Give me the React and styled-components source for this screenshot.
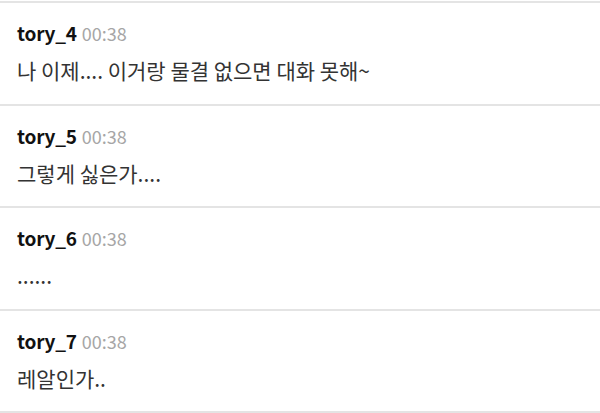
import React from "react";
import styled, { createGlobalStyle } from "styled-components";

const GlobalStyle = createGlobalStyle`
  html, body {
    margin: 0;
    padding: 0;
    background: #fff;
  }
  body {
    font-family: "Noto Sans CJK KR", "Noto Sans", sans-serif;
  }
`;

const messages = [
  { user: "tory_4", time: "00:38", text: "나 이제.... 이거랑 물결 없으면 대화 못해~" },
  { user: "tory_5", time: "00:38", text: "그렇게 싫은가...." },
  { user: "tory_6", time: "00:38", text: "......" },
  { user: "tory_7", time: "00:38", text: "레알인가.." },
];

export default function App() {
  return (
    <>
      <GlobalStyle />
      <List>
        {messages.map((m, i) => (
          <Item key={i}>
            <Header>
              <Name>{m.user}</Name>
              <Time>{m.time}</Time>
            </Header>
            <Text>{m.text}</Text>
          </Item>
        ))}
      </List>
    </>
  );
}

const List = styled.ul`
  list-style: none;
  margin: 1px 0 0;
  padding: 0;
  border-top: 2px solid #e4e4e4;
`;

const Item = styled.li`
  display: flex;
  flex-direction: column;
  gap: 9px;
  height: 102.5px;
  box-sizing: border-box;
  padding: 17px 17px 0;
  border-bottom: 2px solid #e4e4e4;
`;

const Header = styled.div`
  display: flex;
  align-items: baseline;
  gap: 5px;
  line-height: 26px;
`;

const Name = styled.span`
  font-size: 19px;
  font-weight: 700;
  color: #111;
  letter-spacing: -0.2px;
`;

const Time = styled.span`
  font-size: 18px;
  color: #a6a6a6;
`;

const Text = styled.p`
  margin: 0;
  font-size: 21px;
  line-height: 30px;
  color: #333;
`;
